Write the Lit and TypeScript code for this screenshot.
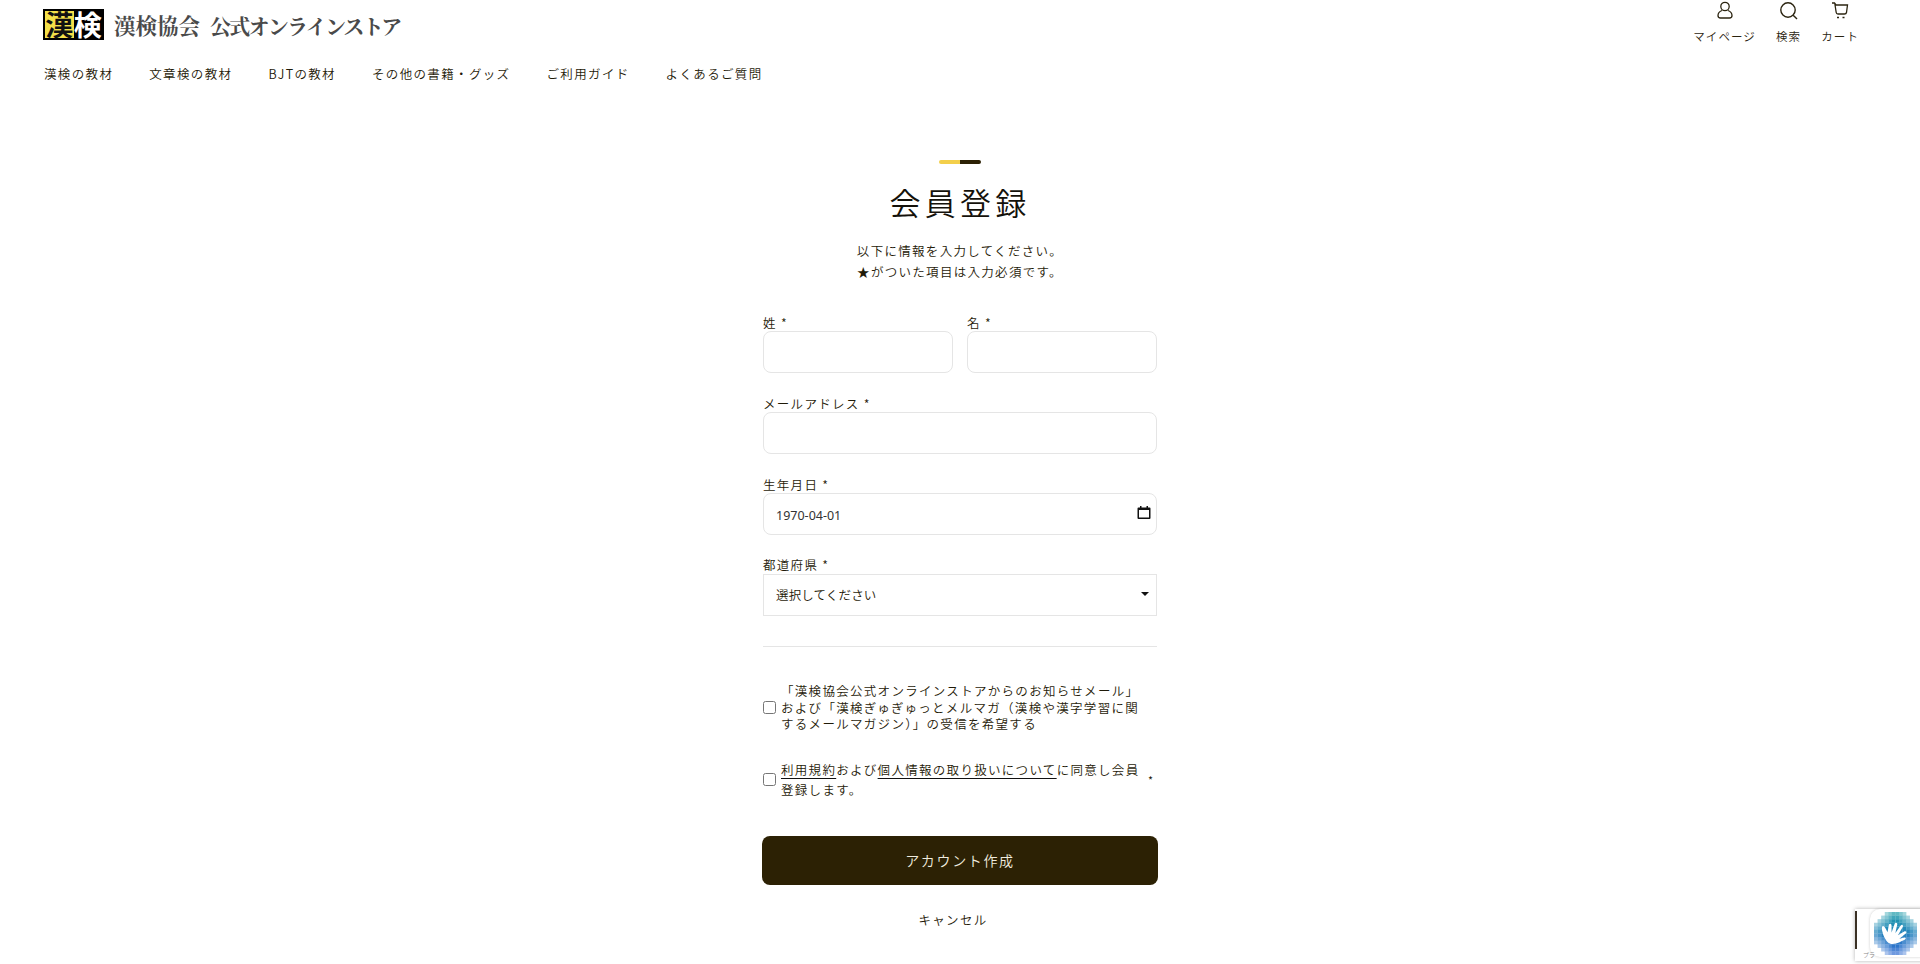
import { LitElement, html, css, svg } from "lit";
import { customElement } from "lit/decorators.js";

const NAV = ["漢検の教材", "文章検の教材", "BJTの教材", "その他の書籍・グッズ", "ご利用ガイド", "よくあるご質問"];

const GRID = 12;
const CELL = 43 / GRID;

function pixelColor(y: number) {
  const t = y / (GRID - 1);
  const r = Math.round(30 + 20 * t);
  const g = Math.round(155 - 45 * t);
  const b = Math.round(170 + 40 * t);
  return `rgb(${r},${g},${b})`;
}

@customElement("app-root")
export class AppRoot extends LitElement {
  static styles = css`
    :host { display: block; background: #fff; color: #1f1a08; font-family: "Noto Sans CJK JP", "Noto Sans", sans-serif; font-weight: 350; height: 964px; overflow: hidden; position: relative; }
    * { box-sizing: border-box; }
    .top { display: flex; justify-content: space-between; padding: 0 61px 0 43px; height: 57px; }
    .logo { display: flex; align-items: center; height: 31px; margin-top: 9px; }
    .mark { display: flex; width: 61px; height: 31px; background: #000; padding: 2px 0 2px 2px; font-family: "Noto Sans CJK JP", serif; font-weight: 700; font-size: 28px; line-height: 27px; }
    .mark span { width: 28.5px; text-align: center; letter-spacing: 0; }
    .mark .k { background: #f4e04a; color: #111; }
    .mark .w { color: #fff; }
    .logotext { margin-left: 10px; font-family: "Noto Serif CJK JP", "Liberation Serif", serif; font-size: 21.5px; font-weight: 700; color: #4a4a4a; white-space: nowrap; letter-spacing: 0; }
    .logotext .gap { margin-left: 10px; font-size: 21px; letter-spacing: -1.75px; }
    .tools { display: flex; gap: 20px; }
    .tool { display: flex; flex-direction: column; align-items: center; font-size: 11.5px; letter-spacing: 1.1px; color: #2b2410; }
    .tool svg { display: block; width: 22px; height: 22px; margin-bottom: 5px; }
    .tool span { line-height: 18px; }
    nav { display: flex; gap: 36px; padding-left: 44px; height: 18px; font-size: 12.5px; line-height: 18px; letter-spacing: 1.35px; margin-top: 8px; }
    main { width: 394px; margin: 0 auto; }
    .bar { display: flex; width: 42px; height: 4px; margin: 77px auto 0; border-radius: 2px; overflow: hidden; }
    .bar i { flex: 1; background: #f3cf4b; }
    .bar i + i { background: #2c2104; }
    h1 { margin: 18px 0 0; text-align: center; font-size: 31px; line-height: 40px; font-weight: 350; letter-spacing: 4.2px; color: #14110a; }
    .lead { margin: 18px 0 0; text-align: center; font-size: 12.5px; line-height: 21px; letter-spacing: 1.3px; }
    .pair { display: grid; grid-template-columns: 1fr 1fr; gap: 14px; margin-top: 32px; }
    .field { margin-top: 22px; }
    .field.pref { margin-top: 21px; }
    .pair .field { margin-top: 0; }
    label.cap { display: block; font-size: 12.5px; line-height: 17px; letter-spacing: 1.3px; white-space: nowrap; }
    input.t, .date { display: block; width: 100%; height: 42px; border: 1px solid #e5e5e5; border-radius: 8px; background: #fff; padding: 0 12px; font: 350 12px "Noto Sans CJK JP", "Noto Sans", sans-serif; color: #1f1a08; outline: none; }
    .date { display: flex; align-items: center; justify-content: space-between; padding: 0 5px 0 12px; }
    .date input { border: 0; outline: none; padding: 2px 0 0; width: 200px; font: 12.5px "Noto Sans", sans-serif; color: #333; background: none; }
    .date svg { display: block; width: 14px; height: 14px; margin-bottom: 5px; }
    .sel { position: relative; margin-top: 1px; }
    .sel::after { content: ""; position: absolute; right: 8px; top: 18px; border: 4px solid transparent; border-top-color: #111; border-bottom: 0; pointer-events: none; }
    select { appearance: none; display: block; width: 100%; height: 42px; border: 1px solid #e5e5e5; border-radius: 0; background: #fff; padding: 0 12px 2px; font: 350 12.5px "Noto Sans CJK JP", sans-serif; letter-spacing: .15px; color: #1f1a08; outline: none; }
    hr { border: 0; border-top: 1px solid #e5e5e5; margin: 30px 0 0; }
    .check { display: flex; align-items: center; gap: 5px; font-size: 12.5px; letter-spacing: 1.3px; }
    .check input { width: 13px; height: 13px; margin: 0; flex: none; }
    .check .txt { width: 362px; flex: none; }
    .news { margin-top: 36px; line-height: 16.5px; }
    .terms { margin-top: 27px; line-height: 20px; }
    .terms a { color: inherit; text-decoration: underline; text-decoration-color: #111; text-decoration-thickness: 1.2px; text-underline-offset: 3px; }
    .star { font-size: 11px; margin-left: 0; }
    button { display: block; width: 396px; height: 49px; margin: 36px -1px 0; border: 0; border-radius: 8px; background: #2c2104; color: #efebdf; font: 350 14px "Noto Sans CJK JP", sans-serif; letter-spacing: 1.65px; }
    .cancel { text-align: center; padding-right: 14px; margin-top: 25px; font-size: 12.5px; line-height: 20px; letter-spacing: 1.3px; }
    .badge { position: absolute; left: 1855px; top: 909px; width: 80px; height: 52px; background: #fff; box-shadow: 0 0 4px rgba(0,0,0,.3); }
    .badge .line { position: absolute; left: 0; top: 2px; width: 2px; height: 38px; background: #3a3024; }
    .badge .tile { position: absolute; left: 15px; top: 0; width: 60px; height: 48px; background: #fff; border-radius: 10px; box-shadow: 0 0 3px rgba(0,0,0,.2); }
    .badge svg { position: absolute; left: 19px; top: 3px; width: 43px; height: 43px; }
    .badge small { position: absolute; left: 8px; top: 42px; font-size: 6px; line-height: 8px; color: #888; }
  `;

  private icon(kind: string) {
    if (kind === "user") return html`<svg viewBox="0 0 22 22" fill="none" stroke="#2b2410" stroke-width="1.3"><circle cx="11" cy="6.5" r="4.2"/><path d="M8 10.5C5 11.5 4 13.5 4 15.5c0 1.500 1 2.500 2.500 2.500h9c1.500 0 2.500-1 2.500-2.500 0-2-1-4-4-5"/></svg>`;
    if (kind === "search") return html`<svg viewBox="0 0 22 22" fill="none" stroke="#2b2410" stroke-width="1.4"><circle cx="10" cy="10" r="7.2"/><path d="M15.2 15.2L19 19"/></svg>`;
    return html`<svg viewBox="0 0 22 22" fill="none" stroke="#2b2410" stroke-width="1.3"><path d="M3 3h2.500l1.500 2h11.500l-1 7.500c-.2 1-1 1.500-2 1.500H9c-1 0-1.700-.6-1.800-1.500L5.800 3.500"/><path d="M8 17.5h2M13.5 17.5h2" stroke-width="1.6"/></svg>`;
  }

  private hand() {
    const c = (GRID - 1) / 2;
    const cells = [];
    for (let y = 0; y < GRID; y++) {
      for (let x = 0; x < GRID; x++) {
        const d = Math.abs(x - c) + Math.abs(y - c);
        if (d > 8) continue;
        const rim = Math.max(0, d - 4) / 4;
        const opacity = 1 - rim * 0.6;
        cells.push(svg`<rect x=${x * CELL} y=${y * CELL} width=${CELL + 0.1} height=${CELL + 0.1} fill=${pixelColor(y)} opacity=${opacity} />`);
      }
    }
    return html`<svg viewBox="0 0 43 43">
      ${cells}
      <path fill="#fff" transform="translate(19.5 21) rotate(28) scale(1.12) translate(-16 -21)" d="M9 27c-2-2-5-5-4.500-6.500s2.500-.5 6.500 2.500L9 16.500c-.5-1.500 1.500-2.200 2.300-.6l3 5.600-1.300-8.500c0-1.700 2.200-1.700 2.500 0l2 7.500 1-8.500c.3-1.700 2.500-1.300 2.300.5L20.500 21l3.500-6c1-1.200 2.500-.2 1.800 1.200L23 23l3.500-3c1.300-.9 2.200.6 1.200 1.700-2.500 3-4.500 7.300-9 9-3.500.9-7.200-1.700-9.700-3.700z"/>
    </svg>`;
  }

  render() {
    return html`
      <header>
        <div class="top">
          <div class="logo">
            <div class="mark"><span class="k">漢</span><span class="w">検</span></div>
            <div class="logotext">漢検協会<span class="gap">公式オンラインストア</span></div>
          </div>
          <div class="tools">
            <div class="tool">${this.icon("user")}<span>マイページ</span></div>
            <div class="tool">${this.icon("search")}<span>検索</span></div>
            <div class="tool">${this.icon("cart")}<span>カート</span></div>
          </div>
        </div>
        <nav>${NAV.map((n) => html`<span>${n}</span>`)}</nav>
      </header>
      <main>
        <div class="bar"><i></i><i></i></div>
        <h1>会員登録</h1>
        <p class="lead">以下に情報を入力してください。<br />★がついた項目は入力必須です。</p>
        <div class="pair">
          <div class="field"><label class="cap">姓 *</label><input class="t" type="text" /></div>
          <div class="field"><label class="cap">名 *</label><input class="t" type="text" /></div>
        </div>
        <div class="field"><label class="cap">メールアドレス *</label><input class="t" type="email" /></div>
        <div class="field">
          <label class="cap">生年月日 *</label>
          <div class="date">
            <input type="text" value="1970-04-01" />
            <svg viewBox="0 0 14 14"><path fill="#111" d="M3 1h1.500v1.500h5V1H11v1.500h1.500a1 1 0 0 1 1 1V13a1 1 0 0 1-1 1h-11a1 1 0 0 1-1-1V3.500a1 1 0 0 1 1-1H3zM2 5v7.500h10V5z"/></svg>
          </div>
        </div>
        <div class="field pref">
          <label class="cap">都道府県 *</label>
          <div class="sel"><select><option>選択してください</option></select></div>
        </div>
        <hr />
        <div class="check news">
          <input type="checkbox" />
          <span class="txt">「漢検協会公式オンラインストアからのお知らせメール」および「漢検ぎゅぎゅっとメルマガ（漢検や漢字学習に関するメールマガジン）」の受信を希望する</span>
        </div>
        <div class="check terms">
          <input type="checkbox" />
          <span class="txt"><a>利用規約</a>および<a>個人情報の取り扱いについて</a>に同意し会員登録します。</span>
          <span class="star">*</span>
        </div>
        <button>アカウント作成</button>
        <div class="cancel">キャンセル</div>
      </main>
      <div class="badge">
        <div class="line"></div>
        <div class="tile"></div>
        ${this.hand()}
        <small>プラ</small>
      </div>
    `;
  }
}
